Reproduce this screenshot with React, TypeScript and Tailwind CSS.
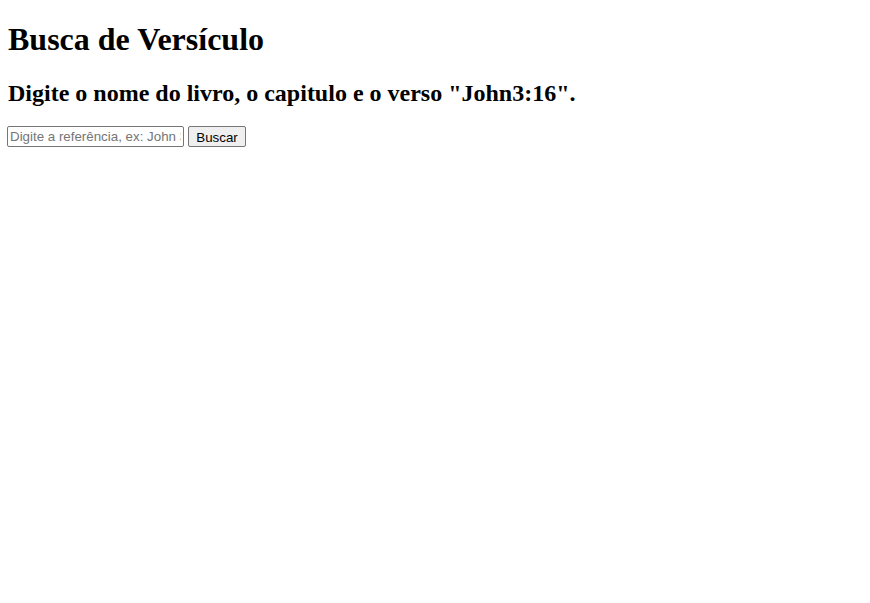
export default function App() {
  return (
    <div className="min-h-screen bg-white px-[8px] text-black font-['Liberation_Serif','Times_New_Roman',serif]">
      <h1 className="pt-[21.44px] mb-[21.44px] text-[32px] font-bold leading-[normal]">Busca de Versículo</h1>
      <h2 className="mb-[19px] text-[24px] font-bold leading-[normal]">
        Digite o nome do livro, o capitulo e o verso "John3:16".
      </h2>
      <div className="-ml-px flex items-center gap-[4px] font-['Liberation_Sans',Arial,sans-serif] text-[13.333px]">
        <input
          type="text"
          placeholder="Digite a referência, ex: John 3:16"
          className="w-[177px] h-[21px] border border-[#767676] rounded-[2px] px-[2px] py-[1px] placeholder:text-[#757575] outline-none"
        />
        <button className="h-[21px] w-[58px] border border-[#767676] bg-[#efefef] rounded-[2px] py-[1px] text-black">
          Buscar
        </button>
      </div>
    </div>
  );
}
